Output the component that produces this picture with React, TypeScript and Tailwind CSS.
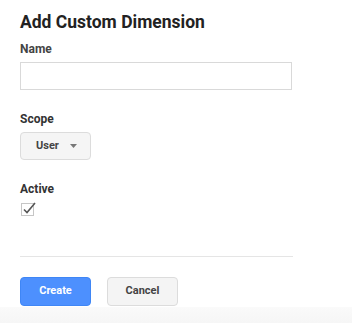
import { useState } from "react";

export default function App() {
    const [active, setActive] = useState(true);
    const [name, setName] = useState("");

    return (
        <div className="w-[352px] h-[323px] flex flex-col bg-white font-['Roboto','Liberation_Sans',sans-serif] overflow-hidden">
            <div className="flex-1 px-5">
                {/* Title */}
                <h1 className="mt-3 text-[17.5px] leading-5 font-bold text-[#222]">
                    Add Custom Dimension
                </h1>

                {/* Name */}
                <label
                    htmlFor="name"
                    className="block mt-[9px] text-xs leading-4 font-bold text-[#444]"
                >
                    Name
                </label>
                <input
                    id="name"
                    type="text"
                    value={name}
                    onChange={(e) => setName(e.target.value)}
                    className="block mt-[5px] w-[272px] h-7 px-2 border border-[#d9d9d9] text-[13px] focus:outline-none"
                />

                {/* Scope */}
                <div className="mt-[21px] text-xs leading-4 font-bold text-[#333]">
                    Scope
                </div>
                <button className="mt-[5px] w-[71px] h-7 flex items-center pl-[15px] gap-[11px] bg-[#f5f5f5] border border-[#dcdcdc] rounded-sm">
                    <span className="text-[11px] font-bold text-[#444]">User</span>
                    <svg width="7" height="4" viewBox="0 0 7 4">
                        <path d="M0 0h7L3.5 4z" fill="#777" />
                    </svg>
                </button>

                {/* Active */}
                <div className="mt-[21px] text-xs leading-4 font-bold text-[#333]">
                    Active
                </div>
                <button
                    onClick={() => setActive(!active)}
                    className="block mt-[6px] ml-px w-[13px] h-[13px] relative border border-[#c6c6c6] bg-white"
                >
                    {active && (
                        <svg
                            className="absolute -top-[3px] left-0"
                            width="15"
                            height="14"
                            viewBox="0 0 15 14"
                        >
                            <path
                                d="M2 8.5l3 3L13 2"
                                fill="none"
                                stroke="#555"
                                strokeWidth="1.6"
                            />
                        </svg>
                    )}
                </button>

                {/* Divider */}
                <div className="mt-10 w-[273px] border-t border-[#e5e5e5]" />

                {/* Actions */}
                <div className="mt-5 flex gap-4">
                    <button className="w-[71px] h-[29px] bg-[#4d90fe] border border-[#3f86f5] rounded-sm text-[11px] font-bold text-white">
                        Create
                    </button>
                    <button className="w-[71px] h-[29px] bg-[#f4f4f4] border border-[#dcdcdc] rounded-sm text-[11px] font-bold text-[#444]">
                        Cancel
                    </button>
                </div>
            </div>
            <div className="h-[16px] shrink-0 bg-gradient-to-b from-[#fafafa] to-[#f6f6f6]" />
        </div>
    );
}
